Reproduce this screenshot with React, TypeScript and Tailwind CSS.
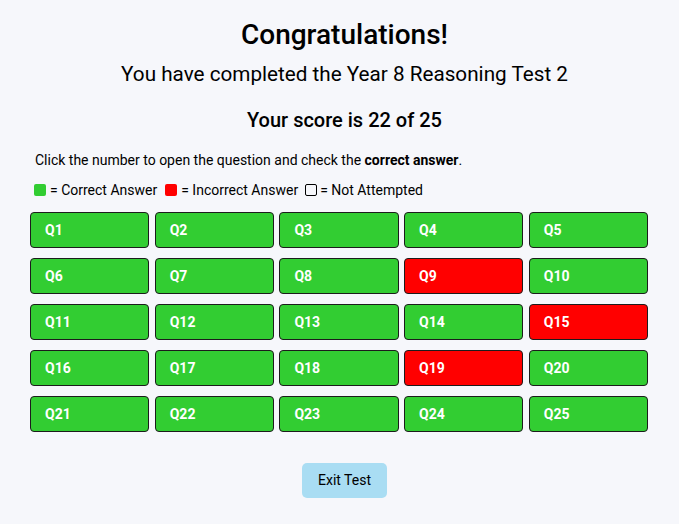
import React from "react";

const wrong = new Set([9, 15, 19]);

export default function App() {
  const qs = Array.from({ length: 25 }, (_, i) => i + 1);
  return (
    <div
      className="min-h-[524px] w-full bg-[#f6f7fb] text-black pl-[30px] pr-[20px] pt-[17px] flex flex-col"
      style={{ fontFamily: "Roboto, 'Noto Sans', sans-serif" }}
    >
      <h1 className="text-center text-[28px] leading-[36px] font-medium">Congratulations!</h1>
      <h2 className="mt-[7px] text-center text-[20.7px] leading-[28px] font-normal">
        You have completed the Year 8 Reasoning Test 2
      </h2>
      <h3 className="mt-[18px] text-center text-[20px] leading-[28px] font-medium">Your score is 22 of 25</h3>
      <p className="mt-[16px] pl-[5px] text-[14px] leading-[20px]">
        Click the number to open the question and check the <b className="font-bold">correct answer</b>.
      </p>
      <div className="mt-[10px] pl-[4px] flex items-center text-[14px] leading-[20px]">
        <span className="inline-block w-[12px] h-[12px] rounded-[2px] bg-[#32cd32] mr-[4px]" />
        <span>= Correct Answer</span>
        <span className="inline-block w-[12px] h-[12px] rounded-[2px] bg-[#ff0000] ml-[8px] mr-[4px]" />
        <span>= Incorrect Answer</span>
        <span className="inline-block w-[12px] h-[12px] rounded-[2px] border border-black ml-[7px] mr-[3px]" />
        <span>= Not Attempted</span>
      </div>
      <div className="mt-[12px] w-[618px] grid grid-cols-5 gap-x-[5.5px] gap-y-[10px]">
        {qs.map((n) => (
          <button
            key={n}
            className={`h-[36px] rounded-[4px] border border-[#1c1c1c] text-left pl-[14px] text-white font-bold text-[14px] ${
              wrong.has(n) ? "bg-[#ff0000]" : "bg-[#32cd32]"
            }`}
          >
            Q{n}
          </button>
        ))}
      </div>
      <div className="mt-[31px] flex justify-center">
        <button className="w-[85px] h-[35px] rounded-[5px] bg-[#a9ddf3] text-[14px] text-black">Exit Test</button>
      </div>
    </div>
  );
}
